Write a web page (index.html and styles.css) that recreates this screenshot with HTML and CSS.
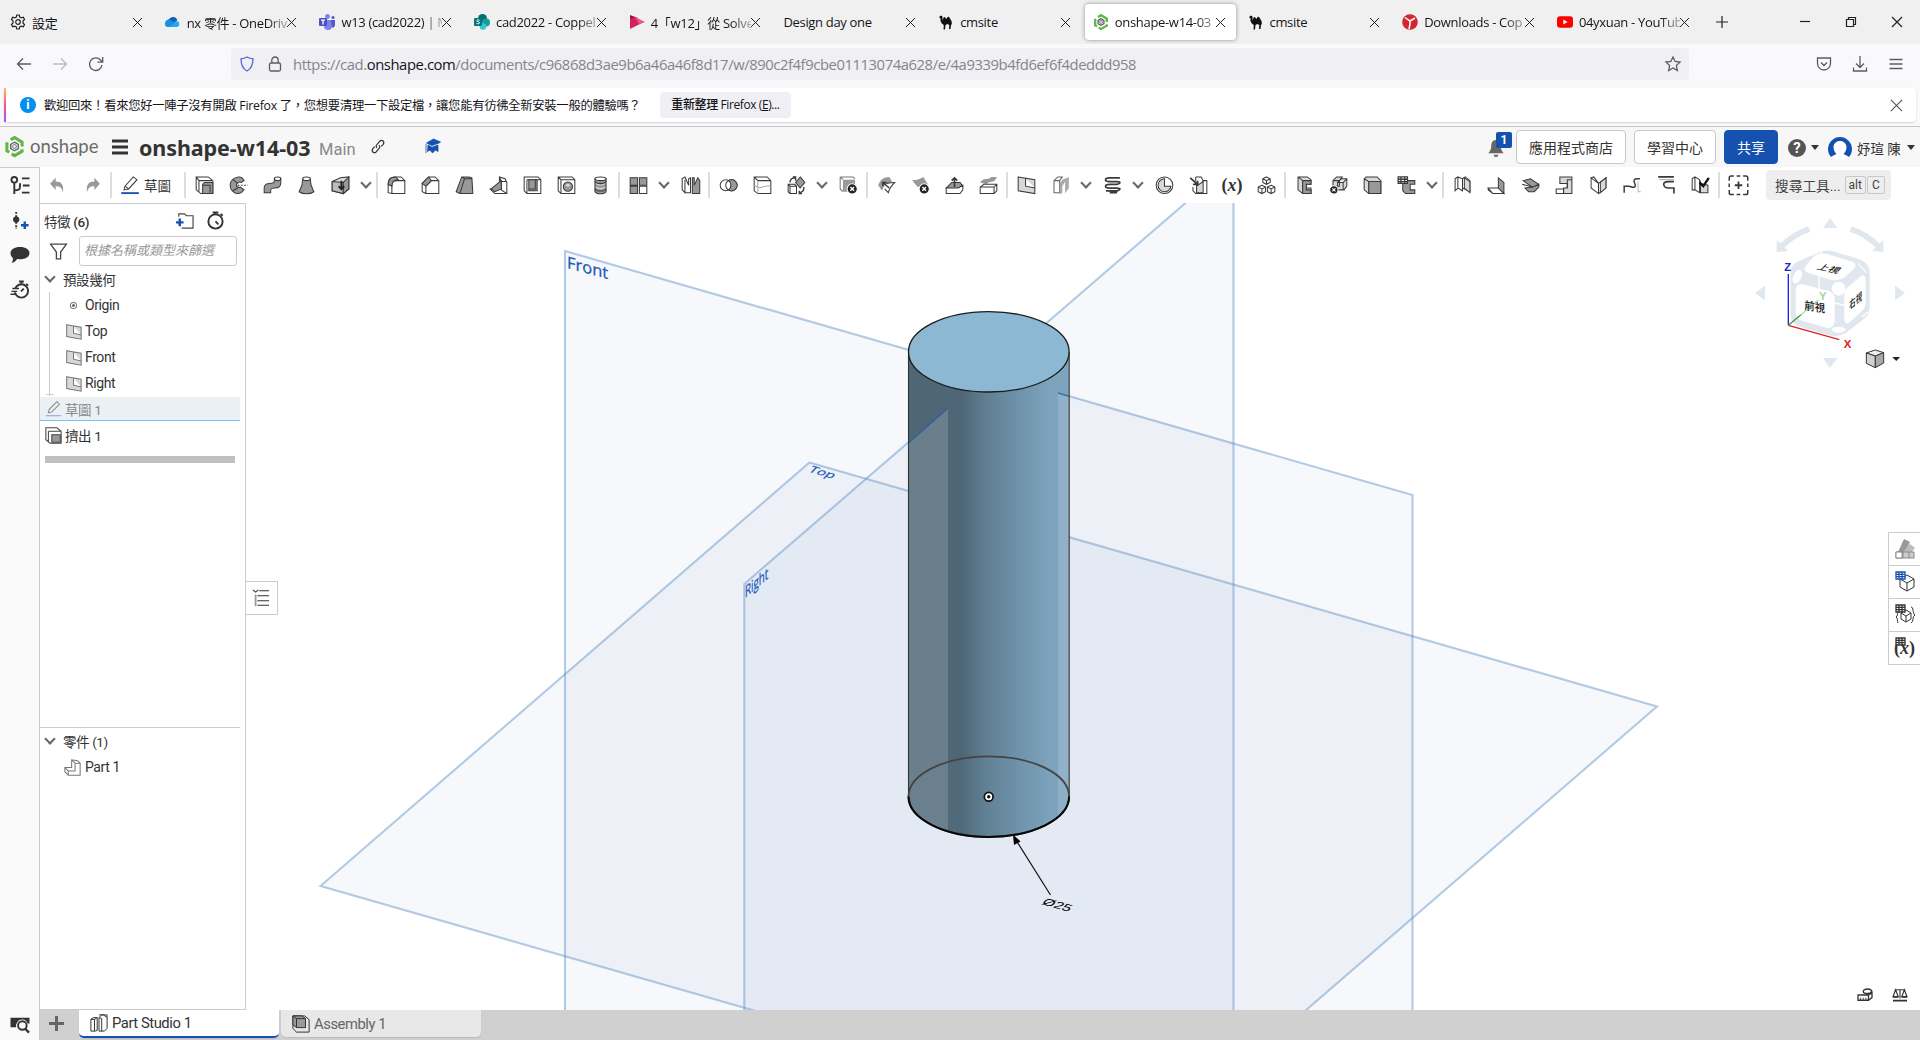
FILE: index.html
```html
<!DOCTYPE html>
<html lang="zh-Hant">
<head>
<meta charset="utf-8">
<title>onshape-w14-03</title>
<link rel="stylesheet" href="styles.css">
</head>
<body>
<div class="tabs">
  <div class="tab"><svg class="fav" viewBox="0 0 16 16"><path class="ln" d="M6.8 1h2.4l.5 2 1.6.9 2-.6 1.2 2.1L13 7v2l1.500 1.600-1.200 2.100-2-.6-1.600.9-.5 2H6.800l-.5-2-1.600-.9-2 .6-1.200-2.100L3 9V7L1.500 5.400l1.200-2.100 2 .6 1.600-.9z"/><circle class="ln" cx="8" cy="8" r="2.300"/></svg><span class="lbl">設定</span><i class="x"></i></div>
  <div class="tab"><svg class="fav" viewBox="0 0 16 16"><path fill="#0f5fb8" d="M4 5a5 5 0 0 1 8.500 1L9 9 3 6z"/><path fill="#1490df" d="M0 10a4 4 0 0 1 4.500-4.500L11 9l-3 4H3a3 3 0 0 1-3-3z"/><path fill="#28a8ea" d="M4 13l8-6a3.200 3.200 0 0 1 .5 6z"/></svg><span class="lbl fade">nx 零件 - OneDriv</span><i class="x"></i></div>
  <div class="tab"><svg class="fav" viewBox="0 0 16 16"><circle cx="8.500" cy="2.500" r="2.400" fill="#7b83eb"/><circle cx="14" cy="3.500" r="1.600" fill="#5059c9"/><path fill="#7b83eb" d="M5 6h8v6a4 4 0 0 1-8 0z"/><path fill="#5059c9" d="M12 6h4v5a2.500 2.500 0 0 1-3 2.500z"/><rect y="4" width="8" height="8" rx="1" fill="#4b53bc"/><path fill="none" stroke="#fff" stroke-width="1.300" d="M2 6.200h4M4 6v4.500"/></svg><span class="lbl fade">w13 (cad2022) | M</span><i class="x"></i></div>
  <div class="tab"><svg class="fav" viewBox="0 0 16 16"><circle cx="8.500" cy="4.500" r="4.500" fill="#036c70"/><circle cx="12" cy="8.500" r="4" fill="#1a9ba1"/><circle cx="9" cy="12.500" r="3.300" fill="#37c6d0"/><rect y="4" width="8" height="8" rx="1" fill="#03787c"/><path fill="none" stroke="#fff" d="M5.500 6.300c-1-.8-3-.5-2.600.7.300 1 2.600.6 2.600 1.800S3.500 10 2.500 9.300"/></svg><span class="lbl fade">cad2022 - Coppel</span><i class="x"></i></div>
  <div class="tab"><svg class="fav" viewBox="0 0 16 16"><path fill="#8d1248" d="M1 1l8 3-4 4-4-2z"/><path fill="#d4205c" d="M1 5l5-2 9 5-14 7z"/><path fill="#f0568a" d="M6 3l10 5-6 2z"/></svg><span class="lbl fade">4「w12」從 Solve</span><i class="x"></i></div>
  <div class="tab"><span class="lbl">Design day one</span><i class="x"></i></div>
  <div class="tab"><svg class="fav camel" viewBox="0 0 16 16"><path d="M1 3l2-1.500 1.500 1V7c.8-3.500 2-5 3-3l1 1c1-3 2.500-3 3.500-.5L13.500 7l.5 4-.8-1-.7 5h-1.500l.3-4-2-1-1.800 1L7 15.500H5.500l.3-4.500-2-1.500L2.500 7V4.500z"/></svg><span class="lbl">cmsite</span><i class="x"></i></div>
  <div class="tab active"><svg class="fav" viewBox="0 0 20 22"><path fill="none" stroke="#5fb845" stroke-width="3.200" d="M6 4l4-2.400 8 4.800v4.500M18 14v2l-8 4.600-3-1.800M4.500 17L2 15.500v-9"/><path fill="none" stroke="#555" stroke-width="1.600" d="M10 6.500l4 2.300v4.500l-4 2.200-4-2.200V8.800z"/><circle cx="10" cy="11" r="2" fill="none" stroke="#555"/></svg><span class="lbl fade">onshape-w14-03</span><i class="x"></i></div>
  <div class="tab"><svg class="fav camel" viewBox="0 0 16 16"><path d="M1 3l2-1.500 1.500 1V7c.8-3.500 2-5 3-3l1 1c1-3 2.500-3 3.500-.5L13.500 7l.5 4-.8-1-.7 5h-1.500l.3-4-2-1-1.800 1L7 15.500H5.500l.3-4.500-2-1.500L2.500 7V4.500z"/></svg><span class="lbl">cmsite</span><i class="x"></i></div>
  <div class="tab"><svg class="fav" viewBox="0 0 16 16"><circle cx="8" cy="8" r="7.800" fill="#d22630"/><path fill="none" stroke="#fff" stroke-width="1.500" d="M3 3.500l5 3.500 5-3M8 6v4l-1 5"/></svg><span class="lbl fade">Downloads - Cop</span><i class="x"></i></div>
  <div class="tab"><svg class="fav" viewBox="0 0 16 16"><rect y="2.300" width="16" height="11.400" rx="3" fill="#f00"/><path fill="#fff" d="M6.300 5.500v5l4.300-2.500z"/></svg><span class="lbl fade">04yxuan - YouTub</span><i class="x"></i></div>
  <svg class="newtab" viewBox="0 0 14 14"><path class="ln" d="M7 1v12M1 7h12"/></svg>
  <div class="win"><svg viewBox="0 0 12 12"><path class="ln" d="M1 5.500h10"/></svg><svg viewBox="0 0 12 12"><path class="ln" d="M1.500 3.500h7v7h-7zM3.500 3.500v-2h7v7h-2"/></svg><svg viewBox="0 0 12 12"><path class="ln" d="M1 1l10 10M11 1L1 11"/></svg></div>
</div>

<div class="nav">
  <svg class="n1" viewBox="0 0 16 16"><path d="M15 8H1.500M7 2.500L1.500 8 7 13.500"/></svg>
  <svg class="n2" viewBox="0 0 16 16"><path d="M1 8h13.500M9 2.500L14.500 8 9 13.500"/></svg>
  <svg class="n3" viewBox="0 0 16 16"><path d="M14 9a6.300 6.300 0 1 1-1.500-5l2 2M14.700 1v5.200H9.500"/></svg>
  <div class="url">
    <svg class="shield" viewBox="0 0 16 16"><path d="M8 1c2 1.200 4 1.700 6 1.800 0 5-1 9.500-6 12.200C3 12.300 2 7.800 2 2.800 4 2.700 6 2.200 8 1z"/></svg>
    <svg class="lock" viewBox="0 0 16 16"><rect x="2.500" y="7" width="11" height="8" rx="1.500"/><path d="M4.800 7V4.200a3.200 3.200 0 0 1 6.400 0V7"/></svg>
    <span class="addr">https://cad.<b>onshape.com</b>/documents/c96868d3ae9b6a46a46f8d17/w/890c2f4f9cbe01113074a628/e/4a9339b4fd6ef6f4deddd958</span>
    <svg class="star" viewBox="0 0 16 16"><path d="M8 1l2.100 4.500 4.900.6-3.600 3.400.9 5L8 12l-4.300 2.500.9-5L1 6.100l4.900-.6z"/></svg>
  </div>
  <div class="navr">
    <svg viewBox="0 0 16 16"><path d="M1.500 2h13v5.500a6.500 6.500 0 0 1-13 0zM5 6.500L8 9.500l3-3"/></svg>
    <svg viewBox="0 0 16 16"><path d="M8 0v11M4 7.500l4 4 4-4M1.500 11.500V15h13v-3.500"/></svg>
    <svg viewBox="0 0 16 16"><path d="M1.500 3.500h13M1.500 8h13M1.500 12.500h13"/></svg>
  </div>
</div>

<div class="notewrap"><div class="note">
  <span class="info">i</span>
  <span class="msg">歡迎回來！看來您好一陣子沒有開啟 Firefox 了，您想要清理一下設定檔，讓您能有彷彿全新安裝一般的體驗嗎？</span>
  <span class="btn">重新整理 Firefox (<u>E</u>)...</span>
  <svg class="close" viewBox="0 0 14 14"><path d="M1 1l12 12M13 1L1 13"/></svg>
</div></div>

<div class="header">
  <svg class="logo" viewBox="0 0 20 22"><path fill="none" stroke="#5fb845" stroke-width="3.200" d="M6 4l4-2.400 8 4.800v4.500M18 14v2l-8 4.600-3-1.800M4.500 17L2 15.500v-9"/><path fill="none" stroke="#666" stroke-width="1.500" d="M10 6.500l4 2.300v4.500l-4 2.200-4-2.200V8.800z"/><circle cx="10" cy="11" r="2" fill="none" stroke="#666"/></svg>
  <span class="brand">onshape</span>
  <svg class="burger" viewBox="0 0 16 16"><path d="M0 2h16M0 8h16M0 14h16"/></svg>
  <span class="doc">onshape-w14-03</span>
  <span class="main">Main</span>
  <svg class="link" viewBox="0 0 16 16"><path d="M7 9.500c-1.500-1.300-1-2.800 0-3.800l3-3.500c2.500-2.200 5.500.8 3.500 3.500l-2 2.200M9 6.500c1.500 1.300 1 2.800 0 3.800l-3 3.500c-2.500 2.200-5.500-.8-3.500-3.500l2-2.200"/></svg>
  <svg class="cap" viewBox="0 0 16 16"><path d="M9 0l7 3-1.500 1L7.500 6.500 2 4zM3.500 6l4 2.300 6-2.300v6.500l-2.500-1.500-3 3-2.500-3-2.500 1.500z"/><path d="M1.500 5v9"/></svg>
  <div class="hright">
    <div class="bell"><svg viewBox="0 0 18 20"><path fill="#666" d="M9 1c4 0 5 3.500 5 7 0 3 1.500 5 3 7H1c1.500-2 3-4 3-7 0-3.500 1-7 5-7zM6.500 16.500h5a2.500 2.500 0 0 1-5 0z"/></svg><span class="badge">1</span></div>
    <span class="hb b1">應用程式商店</span><span class="hb b2">學習中心</span><span class="hb b3">共享</span>
    <span class="help">?</span><i class="car"></i>
    <svg class="ava" viewBox="0 0 24 24"><circle cx="12" cy="12" r="12" fill="#fff"/><path fill="#1651b0" d="M3 20A12 12 0 1 1 21 20C19 18.500 17 17.500 15.500 17c2-2 3-4.500 3-6.500C18.500 6.500 15.500 4 12 4S5.500 6.500 5.500 10.500c0 2 1 4.500 3 6.500-1.500.5-3.500 1.500-5.500 3z"/></svg>
    <span class="user">妤瑄 陳</span><i class="car"></i>
  </div>
</div>

<div class="app">
  <div class="rail">
    <svg viewBox="0 0 20 20"><path class="d2" d="M4 7v12M4 15c5 0 6-1 6-4V7.500M12 2.500h8M13 10h7M12 17.500h8"/><circle class="d2" cx="4" cy="4" r="3"/></svg>
    <svg viewBox="0 0 20 20"><path class="d2" stroke-dasharray="2 1.500" d="M6 1v18"/><circle cx="6" cy="9" r="3.300" fill="#333"/><path stroke="#1651b0" stroke-width="2.500" d="M11 15h8M15 11v8"/></svg>
    <svg viewBox="0 0 20 20"><path fill="#333" d="M10 2c6 0 10 2.700 10 6.500S16 15 10 15l-3-.3C5.500 17 3.500 18.500 1 18.800c1-1.300 1.800-3 1.500-5C1 12.500 0 10.500 0 8.500 0 4.700 4 2 10 2z"/></svg>
    <svg viewBox="0 0 20 20"><circle class="d2" cx="11.500" cy="11.500" r="7"/><path class="d2" d="M9 1.500h5M11.500 2v2M16.500 4l2 2M11 12l3-3"/><path stroke="#fafafa" stroke-width="4" d="M1 11h6"/><path class="d1" stroke-width="1.500" d="M2 9h7M1 12h6M0 15h6"/></svg>
    <svg class="last" viewBox="0 0 20 20"><path fill="#333" d="M0 3h20v6h-2a6 6 0 0 0-11-1 6 6 0 0 0-1 5H0z"/><circle cx="12.500" cy="11" r="4.500" fill="#fafafa" stroke="#333" stroke-width="2"/><path stroke="#333" stroke-width="2.500" d="M15.500 14.500l4 4"/></svg>
  </div>

  <div class="work">
    <div class="tools">
      <span class="t"><svg viewBox="0 0 20 20"><path fill="#999" d="M8 2v4c6 0 9 3 8 12-1-5-3-7-8-7v4L2 8.500z"/></svg></span>
      <span class="t"><svg viewBox="0 0 20 20"><path fill="#999" d="M12 2v4C6 6 3 9 4 18c1-5 3-7 8-7v4l6-6.500z"/></svg></span>
      <i class="sep"></i>
      <span class="sketch"><svg viewBox="0 0 20 20"><path d="M3 15l1-4L13 1l4 3-9 10zM4 11l4 3"/><path stroke="#1651b0" stroke-width="2" d="M0 18.500h19"/></svg>草圖</span>
      <i class="sep"></i>
      <span class="t"><svg viewBox="0 0 20 20"><path d="M1 1h13l5 4v14H6L1 15zM4 5v12M4 5h14M4 5L1 1"/><path class="g" d="M8 9l2-2h9v12H8zM8 10h8v8"/></svg></span>
      <span class="t"><svg viewBox="0 0 20 20"><path class="g" d="M14 2C8-1 1 4 1 10s6 11 12 8l3-3-4-3c-3 1-5-1-4-3s3-3 5-2l3-2z"/><path d="M4 4l5 4M4 16l5-3"/><path stroke-dasharray="2 1.500" d="M9 10h11"/></svg></span>
      <span class="t"><svg viewBox="0 0 20 20"><path class="g" d="M1 18v-5c0-4 3-5 6-5s5 0 5-3V3h7v4c0 5-3 6-6 6s-5 0-5 3v2z"/><ellipse cx="15.500" cy="3" rx="3.500" ry="2" fill="#fff"/></svg></span>
      <span class="t"><svg viewBox="0 0 20 20"><path class="g" d="M6 3L5 10 2 17c4 3 12 3 16 0l-3-7-1-7z"/><ellipse cx="10" cy="3" rx="4" ry="2" fill="#fff"/></svg></span>
      <span class="t"><svg viewBox="0 0 20 20"><path fill="#ddd" d="M1 6l9-4 9-1v13l-6 5-12-3z"/><path fill="#bbb" d="M1 6l12 1v12L1 16z"/><path class="g" d="M13 7l6-6v13l-6 5z"/><path stroke="#222" stroke-width="2" d="M11 5v9M8 11l3 3.500 3-3.500"/></svg></span>
      <span class="c"></span><i class="sep"></i>
      <span class="t"><svg viewBox="0 0 20 20"><path d="M1 18V8c0-5 3-7 7-7h7l4 4v14H5zM5 19V9c0-3 2-4 5-4h9"/><path class="g" d="M1 9c0-5 3-8 8-8l3 3c-4 0-7 2-7 7z"/></svg></span>
      <span class="t"><svg viewBox="0 0 20 20"><path d="M1 17V8l7-7h7l4 4v14H5zM5 19v-8l6-6h8"/><path class="g" d="M1 8l7-7 3 4-6 6z"/></svg></span>
      <span class="t"><svg viewBox="0 0 20 20"><path class="g" d="M1 17L7 1h8l3 1 1 17H5zM7 1l3 2-5 16M10 3h8"/></svg></span>
      <span class="t"><svg viewBox="0 0 20 20"><path d="M1 14l10-3V1l6 2 2 4v12H6zM11 1l2 5v9l6 4M13 6h6"/><path class="g" d="M2 14l11-9v9l-7 3z"/></svg></span>
      <span class="t"><svg viewBox="0 0 20 20"><path d="M1 1h15l3 3v15H4l-3-3zM4 19V4M4 4h15"/><path class="g" d="M6 4h9v12H6zM13 4v10H6"/></svg></span>
      <span class="t"><svg viewBox="0 0 20 20"><path d="M1 1h15l3 3v15H4l-3-3zM4 19V4h15M1 1l3 3"/><circle class="g" cx="11.500" cy="11.500" r="5"/><path fill="#ddd" stroke="none" d="M9 10a3 3 0 0 1 5 0 3 3 0 0 1-5 0z"/></svg></span>
      <span class="t"><svg viewBox="0 0 20 20"><path class="g" d="M4 3v14c2 3 10 3 12 0V3z"/><ellipse cx="10" cy="3" rx="6" ry="2" fill="#fff"/><path stroke="#ddd" d="M5 8c3 2 7 2 10 0M5 12c3 2 7 2 10 0"/><path d="M4 6c2 3 10 3 12 0M4 14c2 3 10 3 12 0"/></svg></span>
      <i class="sep"></i>
      <span class="t"><svg viewBox="0 0 20 20"><path class="g" d="M1 2h8v8H1zM11 2h8v8h-8zM1 11h8v8H1z"/><path fill="#fff" d="M11 11h8v8h-8z"/></svg></span>
      <span class="c"></span>
      <span class="t"><svg viewBox="0 0 20 20"><path d="M1 3l3-2 4 9V3l2-1v16H4l-3-3zM4 19V4"/><path class="g" d="M12 2h2v8l4-8 2 3v14h-8z"/></svg></span>
      <i class="sep"></i>
      <span class="t"><svg viewBox="0 0 20 20"><circle cx="7" cy="10" r="6"/><circle cx="13" cy="10" r="6"/><path class="g" d="M10 5a6 6 0 1 1 0 10 6 6 0 0 0 0-10z"/></svg></span>
      <span class="t"><svg viewBox="0 0 20 20"><path d="M1 1h14l4 4v14H5l-4-3zM1 1l4 4h14"/><path stroke="#aaa" d="M5 5v14M1 10l4 2c5 2 9-3 14-1"/></svg></span>
      <span class="t"><svg viewBox="0 0 20 20"><path d="M1 9h7l2 2v8H3l-2-2zM1 9l2 2h7M3 11v8"/><path class="g" d="M14 1l5 6-5 6-5-6z"/><path stroke-width="1.500" d="M3 7c0-3 2-5 6-5M6 1h3v4M18 12c0 4-1 6-5 6M16 19h-3v-3"/></svg></span>
      <span class="c"></span>
      <span class="t"><svg viewBox="0 0 20 20"><path stroke="#777" d="M1 1h14l2 2M1 1v13l3 3M1 1l3 3"/><path fill="#999" stroke="none" d="M4 4h13v13H4z"/><circle cx="14" cy="14" r="5.500" fill="#222" stroke="#fff"/><path stroke="#fff" stroke-width="1.500" d="M12 12l4 4M16 12l-4 4"/></svg></span>
      <i class="sep"></i>
      <span class="t"><svg viewBox="0 0 20 20"><path fill="#999" stroke="none" d="M1 10C3 4 7 1 13 1l3 5-8 4-3 6z"/><path d="M10 8c4-1 6-1 9-1-3 3-6 6-7 11l-4-4"/><path stroke-width="1.600" d="M13 13L6 7M6 11V7h4"/></svg></span>
      <span class="t"><svg viewBox="0 0 20 20"><path fill="#999" stroke="none" d="M1 4c5 1 9-1 12-3l5 8c-4 2-7 3-11 3-1-2-4-4-6-8z"/><circle cx="14" cy="14" r="5.500" fill="#222" stroke="#fff"/><path stroke="#fff" stroke-width="1.500" d="M12 12l4 4M16 12l-4 4"/></svg></span>
      <span class="t"><svg viewBox="0 0 20 20"><path class="g" d="M1 13l6-6h9l3 4-6 3z"/><path fill="#fff" d="M1 13h13l5-3v5l-3 4H1z"/><path stroke-width="1.800" d="M10 12V2M7 5l3-3 3 3"/></svg></span>
      <span class="t"><svg viewBox="0 0 20 20"><path fill="#999" stroke="none" d="M1 7c4-6 8-2 12-6h6c-3 8-8 3-11 8z"/><path fill="#fff" d="M1 12l4-3h14v7l-3 3H1zM1 12h15l3-3M16 12v7"/></svg></span>
      <i class="sep"></i>
      <span class="t"><svg viewBox="0 0 20 20"><path class="lg" d="M1 1l18 3v15L1 16zM9 2.500V11l10 2"/></svg></span>
      <span class="t"><svg viewBox="0 0 20 20"><path stroke="#666" d="M3 5l4-4h5l-3 4v13H3zM3 5h6"/><path fill="#aaa" stroke="none" d="M12 4l7-3v12l-4 6V6l-3 5v7l-3 2V8z"/></svg></span>
      <span class="c"></span>
      <span class="t"><svg viewBox="0 0 20 20"><path stroke-width="1.900" d="M18 2H7C1 2 1 6 7 6h8c4 0 4 2 0 3H7c-6 0-6 4 0 4h8c4 0 4 2 0 3H3M7 18h8"/></svg></span>
      <span class="c"></span>
      <span class="t"><svg viewBox="0 0 20 20"><circle cx="10" cy="10" r="9"/><path class="lg" d="M10 3a7 7 0 1 0 7 8h-7z"/></svg></span>
      <span class="t"><svg viewBox="0 0 20 20"><path d="M7 1h6l2 4h4v14H7l-3-3v-4M7 1v5M8 9v10M8 9h5l2-4"/><path class="lg" d="M8 11l7-5v12H8z"/><path stroke-width="2" d="M1 2l8 7M9 5v4H4"/></svg></span>
      <span class="t fx">(<em>x</em>)</span>
      <span class="t"><svg viewBox="0 0 20 20"><path d="M10 1l4 2v4l-4 2-4-2V3zM6 3l4 2 4-2M10 5v4M5 10l4 2v5l-4 2-4-2v-5zM1 12l4 2 4-2M5 14v5M15 10l4 2v5l-4 2-4-2v-5zM11 12l4 2 4-2M15 14v5"/></svg></span>
      <i class="sep"></i>
      <span class="t"><svg viewBox="0 0 20 20"><path class="lg" d="M3 1h10l4 3v5h-5v4h5v6H8l-5-4zM3 1l5 4v14M8 5h9"/><path fill="#999" d="M8 5h9v4h-5v6h5v4H8z"/></svg></span>
      <span class="t"><svg viewBox="0 0 20 20"><path class="lg" d="M4 5l4-4h6l-3 4v6H4zM4 5h7M9 7l4-4h6v8l-3 4H9zM9 7h6l4-4M15 7v8"/><circle cx="5" cy="15" r="4.500" fill="#222" stroke="#fff"/><path stroke="#fff" stroke-width="1.300" d="M3.300 13.300l3.400 3.400M6.700 13.300l-3.400 3.400"/></svg></span>
      <span class="t"><svg viewBox="0 0 20 20"><path class="lg" d="M1 3l2-2h12l4 4v14H6l-5-4zM1 3l5 3v13"/><path class="g" d="M6 6h13v13H6z"/></svg></span>
      <span class="t"><svg viewBox="0 0 20 20"><path fill="#999" d="M9 5h10v4h-5v6h5v4H9l-3-3V5z"/><path stroke-width="1.400" fill="#fff" d="M1 1h10v7H1zM1 3.500h10M1 6h10M4 1v7M8 1v7"/></svg></span>
      <span class="c"></span><i class="sep"></i>
      <span class="t"><svg viewBox="0 0 20 20"><path d="M2 3l3-2 5 2v13l-5-3-3 3zM5 1v12M10 3v13M10 3l3-2 5 4v12l-8-4"/><path class="lg" d="M12 2l6 4v12l-6-5z"/></svg></span>
      <span class="t"><svg viewBox="0 0 20 20"><path d="M1 13h12l5 6H6zM1 13v2l5 4"/><path class="g" d="M12 2l6 5v12l-6-6z"/></svg></span>
      <span class="t"><svg viewBox="0 0 20 20"><path class="g" d="M2 5l8-2 9 6-7 3zM4 13l8-1 7-3v3l-5 5H8z"/><path d="M1 9l11 3"/></svg></span>
      <span class="t"><svg viewBox="0 0 20 20"><path class="lg" d="M5 1h13v18H9v-6h4V8H5z"/><path d="M1 14h8v5H1zM13 8V4h5M13 13V8"/></svg></span>
      <span class="t"><svg viewBox="0 0 20 20"><path d="M2 2l8 6v11l-8-6zM10 8l8-6v11l-8 6M2 2l3-1 5 7"/><path class="lg" d="M12 7l6-5v11l-6 5z"/></svg></span>
      <span class="t"><svg viewBox="0 0 20 20"><path stroke-width="1.600" d="M18 3h-3c-3 0-4 2-3 4s2 4 0 5-4-1-6-1H1v7"/><path stroke="#bbb" d="M16 6v11h3"/></svg></span>
      <span class="t"><svg viewBox="0 0 20 20"><path stroke="#aaa" d="M2 4h16"/><path stroke-width="1.800" d="M1 1h17M18 19v-6h-6c-3 0-5-2-5-4s2-3 5-3h6"/></svg></span>
      <span class="t"><svg viewBox="0 0 20 20"><path d="M1 3l3-2 5 3v14l-5-3H1zM4 1v14M9 4l3 8v6"/><path class="lg" d="M10 8l8 2v8H10z"/><path stroke="#111" stroke-width="2.500" d="M9 7l4 4 6-9"/></svg></span>
      <i class="sep"></i>
      <span class="t"><svg viewBox="0 0 20 20"><path stroke-width="1.600" d="M0 5V2q0-2 2-2h3M8 0h4M15 0h3q2 0 2 2v3M20 8v4M20 15v3q0 2-2 2h-3M12 20H8M5 20H2q-2 0-2-2v-3M0 12V8"/><path stroke-width="2" d="M10 6v8M6 10h8"/></svg></span>
      <span class="search">搜尋工具... <kbd>alt</kbd><kbd>C</kbd></span>
    </div>

    <div class="stage">
      <div class="panel">
        <div class="ph"><span>特徵 <b>(6)</b></span>
          <svg viewBox="0 0 20 20"><path d="M4 6V3h6l2 2h7v13H7M4 14v-1"/><path stroke="#1651b0" stroke-width="2.500" d="M1 12h8M5 8v8"/></svg>
          <svg class="sw" viewBox="0 0 20 20"><circle class="d2" cx="10" cy="11" r="7.500"/><path class="d2" d="M7 1.500h6M10 2v2M15.500 3l2 2M10 11l3 3"/></svg></div>
        <div class="pf"><svg viewBox="0 0 16 16"><path d="M.5 1h15L10 8.500V15H6V8.500z"/></svg><span>根據名稱或類型來篩選</span></div>
        <div class="row grp"><i class="chev"></i>預設幾何</div>
        <div class="kids">
          <div class="row"><svg viewBox="0 0 20 20"><circle cx="10" cy="10" r="3.600"/><circle cx="10" cy="10" r="1.300" fill="#555"/></svg>Origin</div>
          <div class="row"><svg viewBox="0 0 20 20"><path class="lg" d="M2 2l17 3v14L2 16zM10 3.500V12l9 2"/></svg>Top</div>
          <div class="row"><svg viewBox="0 0 20 20"><path class="lg" d="M2 2l17 3v14L2 16zM10 3.500V12l9 2"/></svg>Front</div>
          <div class="row"><svg viewBox="0 0 20 20"><path class="lg" d="M2 2l17 3v14L2 16zM10 3.500V12l9 2"/></svg>Right</div>
        </div>
        <div class="row feat sel"><svg viewBox="0 0 20 20"><path d="M4 15l1-4 9-9 3 3-9 9z"/><path stroke="#8aa5d8" d="M1 18.500h18"/></svg>草圖 1</div>
        <div class="row feat"><svg viewBox="0 0 20 20"><path d="M1 1h13l5 4v14H6L1 15zM4 5v12M4 5h14"/><path class="g" d="M8 9h10v9H8z"/></svg>擠出 1</div>
        <div class="bar"></div>
        <div class="parts">
          <div class="row grp"><i class="chev"></i>零件 (1)</div>
          <div class="row part"><svg viewBox="0 0 20 20"><path d="M1 10h8V1l7 1 3 3v14H5l-4-4zM1 10l4 4h8V5h6M9 1l4 4M5 14v5"/></svg>Part 1</div>
        </div>
      </div>

      <div class="view">
        <svg class="scene" viewBox="246 203 1674 807">
          <defs>
            <linearGradient id="body" gradientUnits="userSpaceOnUse" x1="908" y1="0" x2="1069" y2="0">
              <stop offset="0" stop-color="#4f6675"/><stop offset=".33" stop-color="#4e6675"/><stop offset=".48" stop-color="#5f7e91"/><stop offset=".68" stop-color="#6e92a9"/><stop offset=".88" stop-color="#7da3bd"/><stop offset="1" stop-color="#7fa4be"/>
            </linearGradient>
          </defs>
          <g class="plane">
            <path d="M565 251L1412.500 495V1100H565z"/>
            <path d="M809.500 462.500L1657 706.500 1168 1129.500 320.500 886z"/>
            <path d="M744.300 584L1233.500 161.500V1100H744.300z"/>
          </g>
          <g class="ptext">
            <text transform="matrix(1 .27 0 1 567 268)" font-size="16.500">Front</text>
            <text transform="matrix(.97 .28 -.52 .55 807.500 471.500)" font-size="14.500">Top</text>
            <text transform="matrix(.61 -.52 0 1 745 598)" font-size="16">Right</text>
          </g>
          <path fill="url(#body)" d="M908.500 352V796.500a80.300 40.300 0 0 0 160.600 0V352z"/>
          <path fill="#fff" fill-opacity=".16" d="M908.500 443L948 408V831.500Q909 818 908.500 796.500z"/>
          <path fill="#dce8f5" fill-opacity=".2" d="M1058 393l11 3.500V796.500q0 12-11 20z"/>
          <path fill="none" stroke="#235f9e" stroke-opacity=".75" stroke-width="1.600" d="M908.500 443L948 408M1058 393l11 3.200"/>
          <path class="edge" d="M908.500 352V796M1069.200 352V796"/>
          <ellipse cx="988.800" cy="351.800" rx="80.300" ry="40.200" fill="#8cb8d3" stroke="#1c1c1c" stroke-width="1.300"/>
          <ellipse cx="988.800" cy="796.600" rx="80.300" ry="40.300" fill="#6f9bb4" fill-opacity=".08" stroke="#444" stroke-width="1.800"/>
          <path fill="none" stroke="#080808" stroke-width="2" d="M908.500 796.600a80.300 40.300 0 0 0 160.600 0"/>
          <circle cx="988.700" cy="796.700" r="4" fill="none" stroke="#111" stroke-width="2.400"/><circle cx="988.700" cy="796.700" r="2.600" fill="#111" stroke="#fff" stroke-width="1.800"/>
          <path stroke="#111" stroke-width="1.200" d="M1014 837l36.500 58"/><path d="M1013 834.500l7.500 7-6.500 3.500z"/>
          <text class="dim" transform="matrix(.98 .27 -.5 .58 1041 904)">Ø25</text>

          <g transform="translate(1700 200) scale(.33333)">
            <g fill="#e0e7ee">
              <path d="M390 54l22 30h-43zM390 504l22-30h-43zM165 279l30-22v44zM615 279l-30-22v44z"/>
              <path d="M230 120l34 33-34 3zM550 120l-34 33 34 3z"/>
              <path d="M358 157q18-8 38-4l80 24q28 8 33 36v110q-3 24-18 34l-50 40q-22 14-48 10l-92-26q-28-10-29-34V215q2-22 20-30z"/>
            </g>
            <path fill="none" stroke="#e0e7ee" stroke-width="18" d="M328 87q-48 16-82 51M452 87q48 16 82 51"/>
            <g fill="#fff">
              <path d="M345 165q20-8 40-2l72 22q18 8 4 22l-27 25q-16 13-42 7l-66-20q-20-8-8-22z"/>
              <path d="M306 252l78 20q20 6 20 26v66q-2 22-22 20l-75-22q-20-6-20-26v-64q2-22 19-20z"/>
              <path d="M450 256l32-27q14-8 15 10v70q0 14-12 25l-34 32q-17 12-18-10v-72q0-16 17-28z"/>
              <circle cx="416" cy="266" r="21"/><ellipse cx="292" cy="230" rx="12" ry="22" transform="rotate(25 292 230)"/><ellipse cx="416" cy="389" rx="20" ry="9"/>
            </g>
            <path fill="none" stroke="#fff" stroke-width="4" d="M357 225v45M400 308l40 10M475 190l24 28M350 170l16-14M486 350l18-15"/>
            <g fill="none" stroke-width="4"><path stroke="#2222e0" d="M265 222v154"/><path stroke="#de2222" d="M265 376l153 43"/><path stroke="#35a435" d="M265 376l38-32"/><path stroke="#a8dca8" d="M303 344l52-45"/></g>
            <g class="axis"><text x="253" y="212" fill="#2222cc">Z</text><text x="431" y="443" fill="#dc2020">X</text><text x="357" y="300" fill="#9edb9e">Y</text></g>
            <g class="face"><text font-size="32" transform="matrix(1 .2 -.6 .65 348 207)">上視</text><text font-size="31" transform="matrix(1 .16 0 1.100 313 328)">前視</text><text font-size="32" transform="matrix(.6 -.48 0 1.050 448 329)">右視</text></g>
            <g stroke="#333" stroke-width="3"><path fill="#eee" d="M499 459l27-9 25 8-25 10z"/><path fill="#d0d0d0" d="M499 459l27 9v35l-27-13z"/><path fill="#a8a8a8" d="M526 468l25-10v31l-25 14z"/></g><path fill="#222" d="M577 471h23l-11 12z"/>
          </g>
        </svg>
        <div class="fold"><svg viewBox="0 0 20 20"><path stroke="#999" stroke-width="2" d="M4 6v13"/><path stroke-width="1.200" d="M8 2h11M6 7.500h13M6 13h13M6 18h13M1 1l3 2.500L7 1"/></svg></div>
        <div class="side">
          <span><svg viewBox="0 0 20 20"><path fill="#999" d="M3 14L9 1l6 3-5 10z"/><path fill="#bbb" d="M8 14l7-8 5 4-4 5z"/><path fill="#ccc" stroke="#888" d="M1 14h18v6H1zM8 14v6M14 14v6"/><path fill="#fff" stroke="#888" d="M1 14h6v6H1z"/></svg></span>
          <span><svg viewBox="0 0 20 20"><path d="M12 4l7 4v8l-7 4-7-4V8zM5 8l7 4 7-4M12 12v8"/><path fill="#fff" stroke="#1651b0" stroke-width="1.300" d="M1 1h9v7H1zM1 3.300h9M1 5.700h9M4 1v7M7 1v7"/></svg></span>
          <span><svg viewBox="0 0 20 20"><path d="M11 6l5 3v6l-5 3-5-3V9zM6 9l5 3 5-3M11 12v6M3 8c-1 2 0 4-2 5 2 1 1 4 2 6M16 3c3 0 1 6 4 8-3 1-1 7-4 8"/><path fill="#fff" stroke-width="1.300" d="M1 1h9v7H1zM1 3.300h9M1 5.700h9M4 1v7M7 1v7"/></svg></span>
          <span><b class="vx">(<em>x</em>)</b><svg viewBox="0 0 20 20"><path fill="#fff" stroke-width="1.300" d="M1 1h9v7H1zM1 3.300h9M1 5.700h9M4 1v7M7 1v7"/></svg></span>
        </div>
        <div class="meas">
          <svg viewBox="0 0 18 16"><path stroke-width="1.500" d="M1 8h12v6H1zM13 14l4-3V5c0-5-10-5-10-1 0 3 9 3 9 0M13 8l4-2"/><path d="M4 14v-3M7 14v-3M10 14v-3"/></svg>
          <svg viewBox="0 0 18 16"><path stroke-width="1.300" d="M3 2h12M9 2v10M4 2l-3 8h6zM14 2l-3 8h6z"/><path stroke-width="2" d="M1 10h6M11 10h6M1 14.500h16"/></svg>
        </div>
      </div>
    </div>

    <div class="bottom">
      <span class="plus"></span>
      <span class="bt on"><svg viewBox="0 0 20 20"><path d="M1 6l3-2h4v14l-2 1H1zM1 6h4v13M5 6l3-2M10 4l3-3h6v15l-3 3h-6zM10 4l3 1v14M10 1h5l4 3"/></svg>Part Studio 1</span>
      <span class="bt"><svg viewBox="0 0 20 20"><path d="M1 1h13l5 4v14H5l-4-4z"/><path class="g" d="M1 1h10l4 3v10H5l-4-3zM5 4h10M5 4v10M1 1l4 3"/></svg>Assembly 1</span>
    </div>
  </div>
</div>
</body>
</html>
```
FILE: styles.css
```css
* { box-sizing: border-box; }
html { overflow: hidden; }
body { margin: 0; width: 1920px; height: 1040px; overflow: hidden; background: #fff; color: #333; font: 14px Roboto, "Noto Sans CJK TC", sans-serif; display: flex; flex-direction: column; }
svg { display: block; flex: none; fill: none; overflow: visible; }
i, em { font-style: normal; }
.ln { fill: none; stroke: #222; stroke-width: 1.2; }

/* browser tab strip */
.tabs { height: 44px; flex: none; background: #f0f0f0; display: flex; align-items: center; font: 13px "Open Sans", "Noto Sans CJK TC", sans-serif; color: #15141a; letter-spacing: -.32px; }
.tab { width: 150.7px; height: 36px; margin: 0 2px; padding: 0 11px 0 8px; display: flex; align-items: center; border-radius: 4px; flex: none; }
.tab.active { background: #fff; box-shadow: 0 0 4px rgba(0,0,0,.4); }
.fav { width: 16px; height: 16px; margin-right: 6px; }
.camel { fill: #111; }
.lbl { flex: 1; min-width: 0; white-space: nowrap; }
.fade { -webkit-mask-image: linear-gradient(90deg, #000 80%, rgba(0,0,0,.3) 100%); mask-image: linear-gradient(90deg, #000 80%, rgba(0,0,0,.3) 100%); }
.x { width: 9px; height: 9px; flex: none; background: linear-gradient(45deg, transparent 46%, #222 46%, #222 54%, transparent 54%), linear-gradient(-45deg, transparent 46%, #222 46%, #222 54%, transparent 54%); }
.newtab { width: 14px; height: 14px; margin-left: 13px; }
.win { margin-left: auto; display: flex; gap: 34px; padding-right: 17px; }
.win svg { width: 12px; height: 12px; }

/* address bar */
.nav { height: 39px; flex: none; background: #f9f9fb; display: flex; align-items: center; padding-left: 16px; }
.nav svg { width: 16px; height: 16px; stroke: #5b5b66; stroke-width: 1.3; }
.nav .n2 { margin-left: 20px; stroke: #bcbcc2; }
.nav .n3 { margin-left: 20px; }
.url { width: 1458px; height: 32px; margin-left: 127px; background: #f0eff4; border-radius: 4px; display: flex; align-items: center; padding: 0 8px; }
.nav .shield { stroke: #5a62d8; }
.url .lock { margin-left: 12px; }
.addr { flex: 1; margin-left: 10px; font: 14.800px "Open Sans", sans-serif; letter-spacing: -.42px; color: #86858c; white-space: nowrap; }
.addr b { font-weight: 400; color: #15141a; }
.navr { display: flex; gap: 20px; margin-left: auto; padding-right: 16px; }

.notewrap { height: 44px; flex: none; background: #f9f9fb; padding: 5px 4px 0; border-bottom: 1px solid #c6c6c9; }
.note { height: 34px; background: #fff; border-radius: 4px; box-shadow: 0 1px 2px rgba(0,0,0,.15); display: flex; align-items: center; padding: 0 13px 0 14px; border-left: 2px solid; border-image: linear-gradient(#ffbd4f, #ff4f9a 50%, #9059ff) 1; font: 12.3px "Open Sans", "Noto Sans CJK TC", sans-serif; color: #15141a; }
.info { width: 16px; height: 16px; border-radius: 50%; background: #0090ed; color: #fff; font-weight: 700; line-height: 16px; text-align: center; }
.msg { width: 607px; margin-left: 8px; letter-spacing: -.27px; white-space: nowrap; }
.btn { margin-left: 9px; width: 131px; height: 26px; line-height: 26px; background: #f0f0f4; border-radius: 4px; text-align: center; font-weight: 500; font-size: 12px; letter-spacing: -.4px; white-space: nowrap; }
.close { width: 13px; height: 13px; margin-left: auto; stroke: #5b5b66; stroke-width: 1.3; }

/* document header */
.header { height: 40px; flex: none; background: #f7f7f7; display: flex; align-items: center; padding-left: 5px; }
.logo { width: 19px; height: 21px; margin-top: -2px; }
.brand { width: 82px; margin: -3px 0 0 6px; font: 18.5px Lato, sans-serif; color: #6b6b6b; }
.burger { width: 16px; height: 16px; stroke: #333; stroke-width: 2.8; }
.doc { width: 180px; margin-left: 11px; font: 700 21.5px "Noto Sans", sans-serif; letter-spacing: -.1px; white-space: nowrap; }
.main { width: 50px; font: 16.500px Roboto, sans-serif; color: #888; margin-top: 4px; }
.link { width: 16px; height: 15px; margin: -1px 0 0 1px; stroke: #333; stroke-width: 1.3; }
.cap { width: 17px; height: 16px; margin: -1px 0 0 38px; fill: #1651b0; stroke: #1651b0; stroke-width: .8; }
.hright { margin-left: auto; display: flex; align-items: center; padding-right: 5px; }
.bell { position: relative; width: 29px; }
.bell svg { width: 18px; height: 19px; margin-top: 3px; }
.badge { position: absolute; left: 9px; top: -4px; width: 16px; height: 16px; background: #1651b0; border-radius: 2px; color: #fff; font: 700 12px/16px Roboto, sans-serif; text-align: center; }
.hb { height: 34px; border: 1px solid #c8c8c8; border-radius: 4px; background: #fff; line-height: 34px; text-align: center; margin-right: 8px; }
.b1 { width: 110px; }
.b2 { width: 82px; }
.b3 { width: 54px; background: #1651b0; border-color: #1651b0; color: #fff; }
.help { width: 18px; height: 18px; margin: 2px 0 0 2px; border-radius: 50%; background: #555; color: #fff; font: 700 15px/18px Roboto, sans-serif; text-align: center; }
.car { border: 4px solid transparent; border-top: 5px solid #333; border-bottom: 0; margin-left: 5px; }
.ava { width: 24px; height: 24px; margin: 3px 0 0 9px; }
.user { width: 45px; margin: 2px 0 0 5px; font-size: 13.5px; white-space: nowrap; }

.app { flex: 1; display: flex; min-height: 0; }
.rail { width: 40px; background: #fafafa; border-right: 1px solid #ccc; border-top: 1px solid #ccc; padding: 8px 0 6px 10px; display: flex; flex-direction: column; }
.rail svg { width: 20px; height: 19px; margin-bottom: 15.5px; }
.rail .last { margin: auto 0 0; }
.d1 { stroke: #333; }
.d2 { fill: none; stroke: #333; stroke-width: 2; }
.work { flex: 1; display: flex; flex-direction: column; min-width: 0; }

.tools { height: 36px; flex: none; background: #fff; display: flex; align-items: center; }
.t { width: 34px; flex: none; display: flex; justify-content: center; }
.tools svg { width: 19px; height: 18.5px; stroke: #3a3a3a; stroke-width: 1.1; }
.tools .t:nth-child(-n+2) svg { stroke: none; }
.tools .t:first-child { width: 35px; }
.g { fill: #999; }
.lg { fill: #d8d8d8; }
.sep { width: 2px; height: 26px; margin: 0 1px; background: #ddd; flex: none; }
.sketch { width: 70px; display: flex; align-items: center; padding-left: 8px; gap: 4px; font-size: 13.5px; white-space: nowrap; }
.c { width: 18px; flex: none; }
.c::before { content: ""; display: block; width: 6px; height: 6px; margin: -4px 0 0 5px; border: solid #666; border-width: 0 2px 2px 0; transform: rotate(45deg); }
.fx { font: 700 18px "Liberation Serif", serif; }
.fx em, .vx em { font-style: italic; }
.search { width: 125px; height: 30px; margin-left: 11px; border-radius: 4px; background: #eee; display: flex; align-items: center; padding-left: 9px; white-space: nowrap; font-size: 13.7px; color: #444; }
kbd { height: 18px; padding: 0 3px; margin-left: 4px; border: 1px solid #c8c8c8; border-radius: 2px; font: 12px/16px Roboto, sans-serif; }
kbd + kbd { margin-left: 1px; padding: 0 4px; }

.stage { flex: 1; display: flex; min-height: 0; }
.panel { width: 206px; flex: none; border: 1px solid #ccc; border-left: 0; background: #fff; display: flex; flex-direction: column; letter-spacing: -.4px; }
.panel svg { width: 17px; height: 17px; stroke: #444; stroke-width: 1.2; }
.ph { height: 33px; display: flex; align-items: center; padding-left: 4px; font-size: 13.5px; }
.ph span { width: 131px; }
.ph b { font-weight: 500; }
.ph svg { width: 19px; height: 19px; }
.ph .sw { margin-left: 12px; }
.pf { display: flex; align-items: center; padding-left: 10px; height: 28px; }
.pf span { width: 158px; height: 30px; margin-left: 12px; border: 1px solid #ccc; border-radius: 3px; font-size: 13px; font-style: italic; line-height: 28px; color: #999; padding-left: 4px; letter-spacing: 0; }
.row { height: 26px; flex: none; display: flex; align-items: center; font-size: 14px; white-space: nowrap; }
.grp { padding-left: 6px; font-size: 13.5px; }
.panel > .grp { margin-top: 1px; }
.chev { width: 8px; height: 8px; border: solid #666; border-width: 0 2px 2px 0; transform: rotate(45deg); margin: -5px 9px 0 0; }
.kids { margin-left: 9px; border-left: 1px solid #ccc; position: relative; padding-left: 15px; margin-bottom: 1px; height: 104px; }
.kids::after { content: ""; position: absolute; left: -4px; bottom: 1px; width: 8px; border-bottom: 1px solid #ccc; }
.kids .row { gap: 3px; }
.kids svg { stroke: #777; }
.feat { padding-left: 5px; gap: 3px; width: 200px; height: 24px; font-size: 13.5px; }
.feat + .feat { margin-top: 2px; }
.sel { background: #ebf0f5; border-bottom: 1px solid #7dc1ee; color: #888; }
.sel svg { stroke: #888; }
.bar { width: 190px; height: 7px; margin: 9px 0 0 5px; background: #c0c0c0; }
.parts { width: 200px; height: 282px; margin-top: auto; border-top: 1px solid #ccc; }
.part { padding-left: 24px; gap: 4px; }
.part svg { stroke: #777; }

.view { flex: 1; position: relative; min-width: 0; overflow: hidden; }
.scene { width: 1674px; height: 807px; overflow: hidden; fill: #000; }
.plane path { fill: #5773ab; fill-opacity: .052; stroke: #5b8fc7; stroke-opacity: .46; stroke-width: 2.1; }
.ptext { font-family: "Open Sans", sans-serif; fill: #2059b8; stroke: #2059b8; stroke-width: .3; }
.edge { fill: none; stroke: #333; stroke-width: 1.1; }
.dim { font: 15px "Liberation Sans", sans-serif; }
.axis { font: 700 34px "Liberation Sans", sans-serif; }
.face { font-family: "Noto Sans CJK TC", sans-serif; font-weight: 500; fill: #111; }
.fold { position: absolute; left: -1px; top: 378px; width: 33px; height: 34px; background: #fff; border: 1px solid #ccc; border-left: 0; padding: 7px 0 0 7px; }
.fold svg { width: 18px; height: 18px; stroke: #333; }
.side { position: absolute; right: 0; top: 329px; width: 32px; border: 1px solid #ccc; border-width: 1px 0 0 1px; background: #fff; }
.side span { display: block; position: relative; height: 33px; border-bottom: 1px solid #ccc; padding: 5px 0 0 6px; }
.side svg { position: relative; width: 20px; height: 20px; stroke: #333; }
.side span:first-child svg { stroke: none; }
.vx { position: absolute; left: 5px; top: 6px; font: 700 18px/20px "Liberation Serif", serif; }
.meas { position: absolute; right: 12px; bottom: 8px; display: flex; gap: 19px; }
.meas svg { width: 16px; height: 14px; stroke: #333; }

.bottom { height: 30px; flex: none; background: #d0d0d0; display: flex; }
.plus { width: 39px; padding: 6px 0 0 9px; }
.plus::before { content: ""; display: block; width: 15px; height: 15px; background: linear-gradient(#666, #666) center / 15px 3px no-repeat, linear-gradient(#666, #666) center / 3px 15px no-repeat; }
.bt { width: 200px; height: 27px; background: #e8e8e8; border-radius: 0 0 5px 5px; margin-right: 2px; padding-left: 11px; display: flex; align-items: center; gap: 4px; font-size: 14.800px; letter-spacing: -.45px; color: #666; box-shadow: 0 1px 1px #bbb; }
.bt svg { width: 18px; height: 18px; stroke: #333; stroke-width: 1.1; }
.on { height: 28px; background: #fff; border-bottom: 2px solid #1651b0; color: #333; }
```
